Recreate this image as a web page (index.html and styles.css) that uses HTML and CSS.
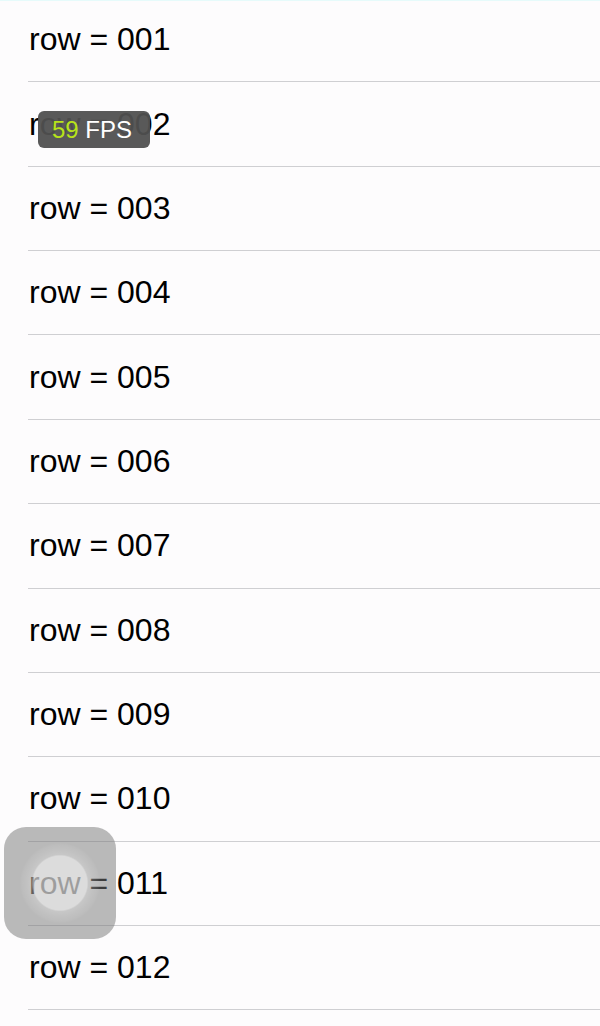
FILE: index.html
```html
<!DOCTYPE html>
<html>
<head>
<meta charset="utf-8">
<link rel="stylesheet" href="styles.css">
</head>
<body>
<div class="topline"></div>
<ul class="list">
  <li class="row">row = 001</li>
  <li class="row">row = 002</li>
  <li class="row">row = 003</li>
  <li class="row">row = 004</li>
  <li class="row">row = 005</li>
  <li class="row">row = 006</li>
  <li class="row">row = 007</li>
  <li class="row">row = 008</li>
  <li class="row">row = 009</li>
  <li class="row">row = 010</li>
  <li class="row">row = 011</li>
  <li class="row">row = 012</li>
</ul>
<div class="fps"><span class="fps-num">59</span> FPS</div>
<div class="assistive"><div class="assistive-dot"></div></div>
</body>
</html>
```
FILE: styles.css
```css
html, body {
  margin: 0;
  padding: 0;
  background: #fdfcfd;
  width: 600px;
  height: 1026px;
  overflow: hidden;
  font-family: "Liberation Sans", Arial, sans-serif;
}
.topline {
  position: absolute;
  left: 0;
  top: 0;
  width: 600px;
  height: 1px;
  background: #e6fbfb;
  z-index: 2;
}
.list {
  list-style: none;
  margin: -2px 0 0 0;
  padding: 0;
}
.row {
  box-sizing: border-box;
  height: 84.36px;
  margin-left: 28px;
  border-bottom: 1px solid #cfcfd2;
  display: flex;
  align-items: center;
  font-size: 32px;
  color: #000;
  padding-left: 1px;
}
.fps {
  position: absolute;
  left: 38px;
  top: 111px;
  width: 112px;
  height: 37px;
  border-radius: 6px;
  background: rgba(80, 80, 80, 0.95);
  color: #fff;
  font-size: 24px;
  line-height: 38px;
  box-sizing: border-box;
  padding-left: 14px;
  white-space: nowrap;
}
.fps-num {
  color: #b7e31a;
}
.assistive {
  position: absolute;
  left: 4px;
  top: 827px;
  width: 112px;
  height: 112px;
  border-radius: 22px;
  background: rgba(118, 118, 118, 0.5);
  display: flex;
  align-items: center;
  justify-content: center;
}
.assistive-dot {
  width: 112px;
  height: 112px;
  border-radius: 50%;
  background: radial-gradient(circle, rgba(255,255,255,0.5) 0, rgba(255,255,255,0.5) 34%, rgba(255,255,255,0.2) 36%, rgba(255,255,255,0.12) 42%, rgba(255,255,255,0.06) 48%, rgba(255,255,255,0) 51%);
}
```
